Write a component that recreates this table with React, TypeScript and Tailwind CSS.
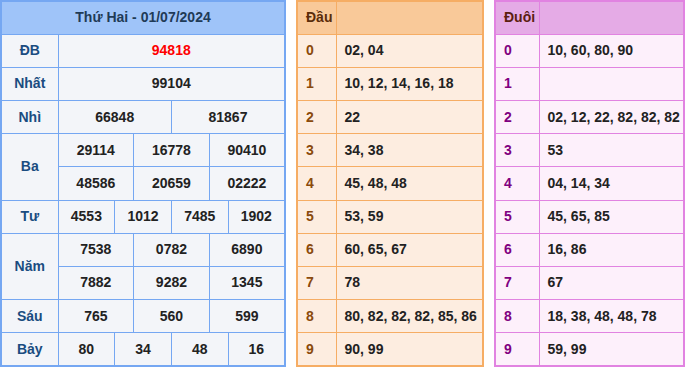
const dau = [
  "02, 04",
  "10, 12, 14, 16, 18",
  "22",
  "34, 38",
  "45, 48, 48",
  "53, 59",
  "60, 65, 67",
  "78",
  "80, 82, 82, 82, 85, 86",
  "90, 99",
];

const duoi = [
  "10, 60, 80, 90",
  "",
  "02, 12, 22, 82, 82, 82",
  "53",
  "04, 14, 34",
  "45, 65, 85",
  "16, 86",
  "67",
  "18, 38, 48, 48, 78",
  "59, 99",
];

const cellL = "border border-[#75a7f2] text-center";
const lab = "border border-[#75a7f2] text-center text-[#1a4c80]";

function Results() {
  return (
    <table className="w-[286px] shrink-0 table-fixed border-collapse border-2 border-[#75a7f2] bg-[#f3f5f9] text-[14px] font-bold text-[#222]">
      <colgroup>
        <col className="w-[57px]" />
        {Array.from({ length: 12 }).map((_, i) => (
          <col key={i} />
        ))}
      </colgroup>
      <tbody>
        <tr className="h-[33px] bg-[#9fc4f9]">
          <td colSpan={13} className="border border-[#75a7f2] text-center font-bold text-[#1f3b57]">
            Thứ Hai - 01/07/2024
          </td>
        </tr>
        <tr className="h-[33px]">
          <td className={lab}>ĐB</td>
          <td colSpan={12} className={`${cellL} text-[#ff0000]`}>94818</td>
        </tr>
        <tr className="h-[33px]">
          <td className={lab}>Nhất</td>
          <td colSpan={12} className={cellL}>99104</td>
        </tr>
        <tr className="h-[33px]">
          <td className={lab}>Nhì</td>
          <td colSpan={6} className={cellL}>66848</td>
          <td colSpan={6} className={cellL}>81867</td>
        </tr>
        <tr className="h-[33px]">
          <td rowSpan={2} className={lab}>Ba</td>
          <td colSpan={4} className={cellL}>29114</td>
          <td colSpan={4} className={cellL}>16778</td>
          <td colSpan={4} className={cellL}>90410</td>
        </tr>
        <tr className="h-[33px]">
          <td colSpan={4} className={cellL}>48586</td>
          <td colSpan={4} className={cellL}>20659</td>
          <td colSpan={4} className={cellL}>02222</td>
        </tr>
        <tr className="h-[33px]">
          <td className={lab}>Tư</td>
          <td colSpan={3} className={cellL}>4553</td>
          <td colSpan={3} className={cellL}>1012</td>
          <td colSpan={3} className={cellL}>7485</td>
          <td colSpan={3} className={cellL}>1902</td>
        </tr>
        <tr className="h-[33px]">
          <td rowSpan={2} className={lab}>Năm</td>
          <td colSpan={4} className={cellL}>7538</td>
          <td colSpan={4} className={cellL}>0782</td>
          <td colSpan={4} className={cellL}>6890</td>
        </tr>
        <tr className="h-[33px]">
          <td colSpan={4} className={cellL}>7882</td>
          <td colSpan={4} className={cellL}>9282</td>
          <td colSpan={4} className={cellL}>1345</td>
        </tr>
        <tr className="h-[33px]">
          <td className={lab}>Sáu</td>
          <td colSpan={4} className={cellL}>765</td>
          <td colSpan={4} className={cellL}>560</td>
          <td colSpan={4} className={cellL}>599</td>
        </tr>
        <tr className="h-[33px]">
          <td className={lab}>Bảy</td>
          <td colSpan={3} className={cellL}>80</td>
          <td colSpan={3} className={cellL}>34</td>
          <td colSpan={3} className={cellL}>48</td>
          <td colSpan={3} className={cellL}>16</td>
        </tr>
      </tbody>
    </table>
  );
}

function LotoTable({
  title,
  rows,
  width,
  firstCol,
  border,
  head,
  body,
  headText,
  digit,
}: {
  title: string;
  rows: string[];
  width: string;
  firstCol: string;
  border: string;
  head: string;
  body: string;
  headText: string;
  digit: string;
}) {
  const td = `border ${border} pl-2 pr-0 text-left whitespace-nowrap overflow-hidden`;
  return (
    <table className={`${width} shrink-0 table-fixed border-collapse border-2 ${border} ${body} text-[14px] font-bold text-[#222]`}>
      <colgroup>
        <col className={firstCol} />
        <col />
      </colgroup>
      <tbody>
        <tr className={`h-[33px] ${head}`}>
          <td className={`${td} ${headText}`}>{title}</td>
          <td className={td}></td>
        </tr>
        {rows.map((r, i) => (
          <tr key={i} className="h-[33px]">
            <td className={`${td} ${digit}`}>{i}</td>
            <td className={td}>{r}</td>
          </tr>
        ))}
      </tbody>
    </table>
  );
}

export default function App() {
  return (
    <div className="flex h-[367px] w-[686px] gap-[10px] bg-white font-['Liberation_Sans',Arial,sans-serif]">
      <Results />
      <LotoTable
        title="Đầu"
        rows={dau}
        width="w-[188px]"
        firstCol="w-[39px]"
        border="border-[#f6ad64]"
        head="bg-[#f9c999]"
        body="bg-[#fdede0]"
        headText="text-[#5b2c0a]"
        digit="text-[#8a4a0c]"
      />
      <LotoTable
        title="Đuôi"
        rows={duoi}
        width="w-[191px]"
        firstCol="w-[44px]"
        border="border-[#e183e1]"
        head="bg-[#e5abe6]"
        body="bg-[#fdf0fb]"
        headText="text-[#5b2010]"
        digit="text-[#800080]"
      />
    </div>
  );
}
